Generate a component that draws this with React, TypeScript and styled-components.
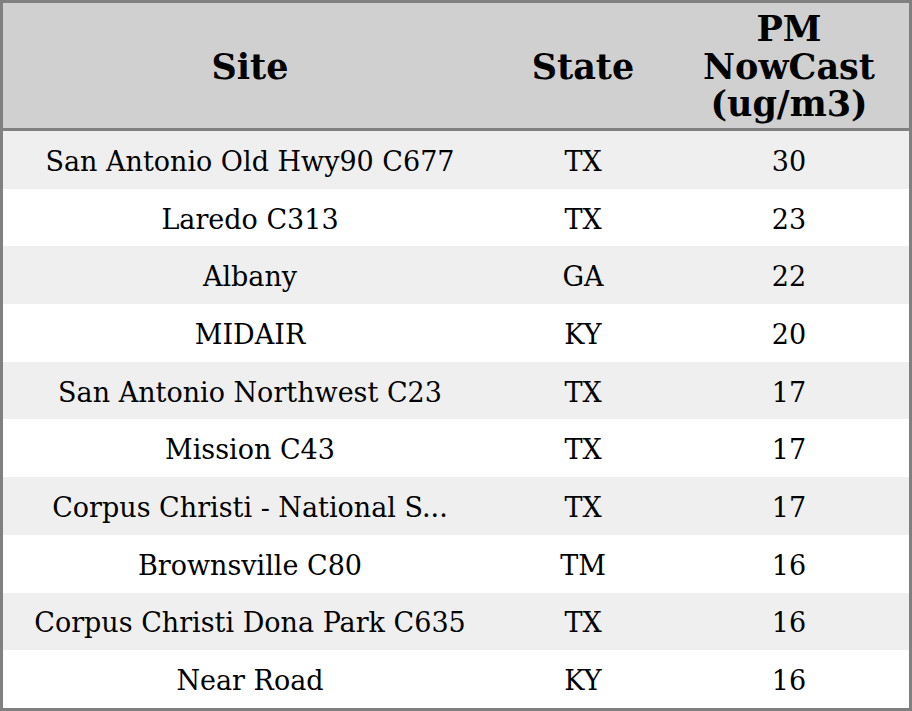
import React from 'react';
import styled, { createGlobalStyle } from 'styled-components';

const GlobalStyle = createGlobalStyle`
  html, body {
    margin: 0;
    padding: 0;
    background: #ffffff;
  }
  body {
    font-family: 'DejaVu Serif', 'Liberation Serif', serif;
    color: #000;
  }
`;

const Table = styled.table`
  width: 912px;
  height: 711px;
  box-sizing: border-box;
  border: 3px solid #808080;
  border-spacing: 0;
  border-collapse: separate;
  table-layout: fixed;
`;

const HeadCell = styled.th`
  height: 123px;
  padding: 2px 8px 0;
  background: #d0d0d0;
  border-bottom: 3px solid #808080;
  font-size: 35px;
  font-weight: bold;
  line-height: 37.5px;
  text-align: center;
  vertical-align: middle;
`;

const Row = styled.tr<{ $shaded: boolean }>`
  height: 57.7px;
  background: ${(p) => (p.$shaded ? '#efefef' : '#ffffff')};
`;

const Cell = styled.td`
  padding: 3px 8px 0;
  font-size: 27px;
  text-align: center;
  vertical-align: middle;
  white-space: nowrap;
  overflow: hidden;
  text-overflow: ellipsis;
`;

type Reading = { site: string; state: string; pm: number };

const readings: Reading[] = [
  { site: 'San Antonio Old Hwy90 C677', state: 'TX', pm: 30 },
  { site: 'Laredo C313', state: 'TX', pm: 23 },
  { site: 'Albany', state: 'GA', pm: 22 },
  { site: 'MIDAIR', state: 'KY', pm: 20 },
  { site: 'San Antonio Northwest C23', state: 'TX', pm: 17 },
  { site: 'Mission C43', state: 'TX', pm: 17 },
  { site: 'Corpus Christi - National S...', state: 'TX', pm: 17 },
  { site: 'Brownsville C80', state: 'TM', pm: 16 },
  { site: 'Corpus Christi Dona Park C635', state: 'TX', pm: 16 },
  { site: 'Near Road', state: 'KY', pm: 16 },
];

export default function App() {
  return (
    <>
      <GlobalStyle />
      <Table>
        <colgroup>
          <col style={{ width: 494 }} />
          <col style={{ width: 172 }} />
          <col style={{ width: 240 }} />
        </colgroup>
        <thead>
          <tr>
            <HeadCell>Site</HeadCell>
            <HeadCell>State</HeadCell>
            <HeadCell>PM NowCast (ug/m3)</HeadCell>
          </tr>
        </thead>
        <tbody>
          {readings.map((r, i) => (
            <Row key={i} $shaded={i % 2 === 0}>
              <Cell>{r.site}</Cell>
              <Cell>{r.state}</Cell>
              <Cell>{r.pm}</Cell>
            </Row>
          ))}
        </tbody>
      </Table>
    </>
  );
}
